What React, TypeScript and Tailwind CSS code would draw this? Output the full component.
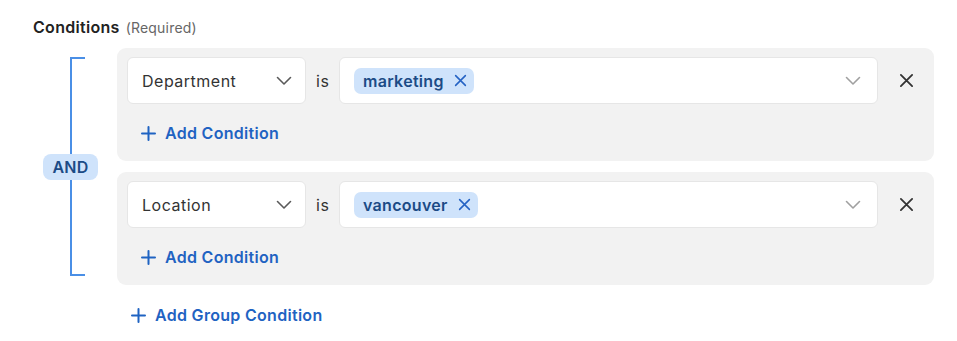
import React from "react";

const Chevron = ({ color }: { color: string }) => (
  <svg width="16" height="10" viewBox="0 0 16 10" fill="none">
    <path d="M1.5 1.5 L8 8 L14.5 1.5" stroke={color} strokeWidth="1.6" strokeLinecap="round" strokeLinejoin="round" />
  </svg>
);

const Cross = ({ size, color, sw }: { size: number; color: string; sw: number }) => (
  <svg width={size} height={size} viewBox="0 0 16 16" fill="none">
    <path d="M2 2 L14 14 M14 2 L2 14" stroke={color} strokeWidth={sw} strokeLinecap="round" />
  </svg>
);

const Plus = () => (
  <svg width="15" height="15" viewBox="0 0 15 15" fill="none">
    <path d="M7.5 1 V14 M1 7.5 H14" stroke="#1f63c2" strokeWidth="2" strokeLinecap="round" />
  </svg>
);

function Group({ field, value }: { field: string; value: string }) {
  return (
    <div className="bg-[#f2f2f2] rounded-[9px] pl-[10px] pr-[20px] pt-[9px] pb-[16px]">
      <div className="flex items-center h-[47px]">
        <div className="w-[179px] h-full bg-white rounded-[6px] border border-[#e6e6e6] flex items-center justify-between pl-[14px] pr-[13px] text-[16px] tracking-[0.5px] text-[#333]">
          <span>{field}</span>
          <Chevron color="#5a5a5a" />
        </div>
        <span className="ml-[10px] w-[23px] text-[16px] tracking-[0.5px] text-[#333]">is</span>
        <div className="flex-1 h-full bg-white rounded-[6px] border border-[#e6e6e6] flex items-center justify-between pl-[14px] pr-[16px]">
          <span className="flex items-center h-[26px] bg-[#cfe3fb] rounded-[7px] pl-[9px] pr-[7px] gap-[10px] text-[16px] tracking-[0.3px] font-semibold text-[#1c4b86]">
            {value}
            <Cross size={13} color="#2563c4" sw={1.9} />
          </span>
          <Chevron color="#a0a0a0" />
        </div>
        <div className="ml-[21px]">
          <Cross size={15} color="#333" sw={1.9} />
        </div>
      </div>
      <div className="mt-[17px] h-6 flex items-center pl-[14px] gap-[9px] text-[16px] tracking-[0.3px] font-semibold text-[#1f63c2]">
        <Plus />
        <span>Add Condition</span>
      </div>
    </div>
  );
}

export default function App() {
  return (
    <div className="w-[957px] h-[341px] bg-white pl-[33px] pt-[15px]" style={{ fontFamily: "Inter, 'Noto Sans', sans-serif" }}>
      <div className="h-6 flex items-baseline gap-[6px]">
        <span className="text-[16px] tracking-[0.3px] font-semibold text-[#222]">Conditions</span>
        <span className="text-[14px] tracking-[0.2px] text-[#666]">(Required)</span>
      </div>
      <div className="mt-[9px] flex">
        <div className="w-[84px] flex items-stretch">
          <div className="ml-[10px] w-[55px] flex flex-col py-[9px]">
            <div className="flex-1 ml-[27px] w-[15px] border-l-2 border-t-2 border-[#4a8fe6]" />
            <div className="h-[26px] w-[55px] bg-[#cfe3fb] rounded-[8px] flex items-center justify-center text-[16px] tracking-[0.3px] font-semibold text-[#1c4b86]">
              AND
            </div>
            <div className="flex-1 ml-[27px] w-[15px] border-l-2 border-b-2 border-[#4a8fe6]" />
          </div>
        </div>
        <div className="w-[817px] flex flex-col gap-[11px]">
          <Group field="Department" value="marketing" />
          <Group field="Location" value="vancouver" />
        </div>
      </div>
      <div className="mt-[18px] ml-[98px] h-6 flex items-center gap-[9px] text-[16px] tracking-[0.3px] font-semibold text-[#1f63c2]">
        <Plus />
        <span>Add Group Condition</span>
      </div>
    </div>
  );
}
